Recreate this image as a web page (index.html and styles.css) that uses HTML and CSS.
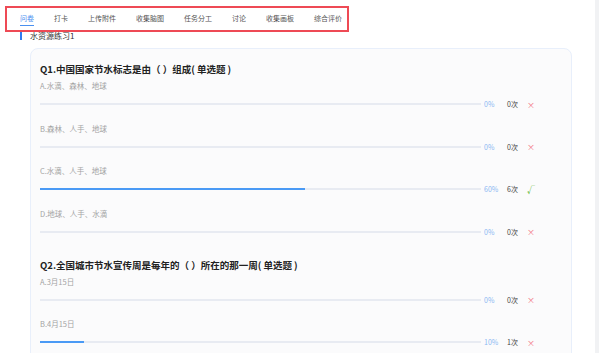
FILE: index.html
```html
<!DOCTYPE html>
<html lang="zh-CN">
<head>
  <meta charset="UTF-8">
  <title>问卷统计</title>
  <link rel="stylesheet" href="styles.css">
</head>
<body>

<div class="main">
  <div class="tabs">
    <span class="tab active">问卷</span>
    <span class="tab">打卡</span>
    <span class="tab">上传附件</span>
    <span class="tab">收集脑图</span>
    <span class="tab">任务分工</span>
    <span class="tab">讨论</span>
    <span class="tab">收集画板</span>
    <span class="tab">综合评价</span>
  </div>

  <div class="heading">水资源练习1</div>

  <div class="card">
    <div class="question">
      <div class="q-title">Q1.中国国家节水标志是由（ ）组成( 单选题 )</div>

      <div class="opt">
        <div class="opt-label">A.水滴、森林、地球</div>
        <div class="opt-row">
          <div class="bar"><div class="fill" style="width: 0%"></div></div>
          <span class="pct">0%</span>
          <span class="cnt">0次</span>
          <span class="mark wrong">×</span>
        </div>
      </div>

      <div class="opt">
        <div class="opt-label">B.森林、人手、地球</div>
        <div class="opt-row">
          <div class="bar"><div class="fill" style="width: 0%"></div></div>
          <span class="pct">0%</span>
          <span class="cnt">0次</span>
          <span class="mark wrong">×</span>
        </div>
      </div>

      <div class="opt">
        <div class="opt-label">C.水滴、人手、地球</div>
        <div class="opt-row">
          <div class="bar"><div class="fill" style="width: 60%"></div></div>
          <span class="pct">60%</span>
          <span class="cnt">6次</span>
          <span class="mark right">√</span>
        </div>
      </div>

      <div class="opt">
        <div class="opt-label">D.地球、人手、水滴</div>
        <div class="opt-row">
          <div class="bar"><div class="fill" style="width: 0%"></div></div>
          <span class="pct">0%</span>
          <span class="cnt">0次</span>
          <span class="mark wrong">×</span>
        </div>
      </div>
    </div>

    <div class="question">
      <div class="q-title">Q2.全国城市节水宣传周是每年的（ ）所在的那一周( 单选题 )</div>

      <div class="opt">
        <div class="opt-label">A.3月15日</div>
        <div class="opt-row">
          <div class="bar"><div class="fill" style="width: 0%"></div></div>
          <span class="pct">0%</span>
          <span class="cnt">0次</span>
          <span class="mark wrong">×</span>
        </div>
      </div>

      <div class="opt">
        <div class="opt-label">B.4月15日</div>
        <div class="opt-row">
          <div class="bar"><div class="fill" style="width: 10%"></div></div>
          <span class="pct">10%</span>
          <span class="cnt">1次</span>
          <span class="mark wrong">×</span>
        </div>
      </div>
    </div>
  </div>
</div>

<div class="scrollbar"></div>

</body>
</html>
```

FILE: styles.css
```css
body {
  margin: 0;
  height: 353px;
  overflow: hidden;
  display: flex;
  background: #fff;
  font-family: "Noto Sans CJK SC", "Noto Sans", sans-serif;
  color: #333;
}

.main {
  flex: 1;
  min-width: 0;
  height: 353px;
  overflow: hidden;
}

.scrollbar {
  width: 4px;
  background: #f1f2f4;
}

/* tabs */
.tabs {
  margin: 6px 0 0 5px;
  width: 344px;
  height: 26px;
  box-sizing: border-box;
  border: 2px solid #ee4a55;
  display: flex;
  align-items: center;
  gap: 20px;
  padding-left: 13px;
}

.tab {
  font-size: 7px;
  line-height: 10px;
  color: #555;
  padding-top: 1px;
  padding-bottom: 2px;
  border-bottom: 1px solid transparent;
}

.tab.active {
  color: #4a90f0;
  border-bottom-color: #4a90f0;
}

/* heading */
.heading {
  margin: 0 0 0 20px;
  height: 8px;
  border-left: 2px solid #2f7bf0;
  padding-left: 8px;
  font-size: 8px;
  line-height: 8px;
  color: #333;
}

/* card */
.card {
  margin: 8px 0 0 30px;
  width: 542px;
  box-sizing: border-box;
  border: 1px solid #e8effb;
  border-radius: 8px;
  background: #fbfbfc;
  padding: 13px 30px 30px 9px;
}

.question {
  margin-bottom: 19px;
}

.q-title {
  font-size: 9.5px;
  font-weight: bold;
  line-height: 14px;
  color: #222;
  margin-bottom: 3px;
}

.opt {
  margin-bottom: 10.5px;
}

.opt-label {
  font-size: 7.5px;
  line-height: 14px;
  color: #a3a3a3;
  margin-bottom: 4px;
}

.opt-row {
  height: 14px;
  display: flex;
  align-items: center;
}

.bar {
  flex: none;
  width: 441px;
  height: 2px;
  background: #e8ebf2;
}

.fill {
  height: 100%;
  background: #4a9af5;
}

.pct {
  width: 23px;
  margin-left: 3px;
  font-size: 7px;
  color: #8cb8f2;
}

.cnt {
  width: 20px;
  font-size: 7px;
  color: #444;
}

.mark {
  font-size: 8px;
}

.mark.wrong {
  color: #f2727e;
}

.mark.right {
  color: #5cb82e;
  font-weight: bold;
}
```
